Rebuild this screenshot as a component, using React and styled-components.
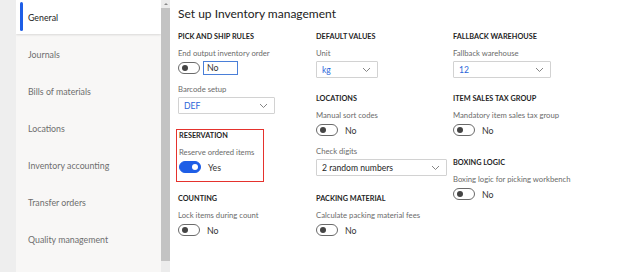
import React from 'react'
import styled, { createGlobalStyle } from 'styled-components'

const navItems = [
  'General',
  'Journals',
  'Bills of materials',
  'Locations',
  'Inventory accounting',
  'Transfer orders',
  'Quality management',
]

const App = () => {
  return (
    <Root>
      <GlobalStyle />
      <Gutter />
      <Nav>
        <NavList>
          {navItems.map((item, i) => (
            <NavItem key={item} active={i === 0}>
              {i === 0 && <ActiveBar />}
              {item}
            </NavItem>
          ))}
        </NavList>
      </Nav>
      <ScrollBar>
        <ScrollArrow />
        <ScrollThumb />
      </ScrollBar>
      <Main>
        <Title>Set up Inventory management</Title>
        <Columns>
          <Column>
            <Section>
              <Header>Pick and ship rules</Header>
              <Field>
                <Label>End output inventory order</Label>
                <ToggleRow>
                  <Toggle />
                  <ValueBox>No</ValueBox>
                </ToggleRow>
              </Field>
              <Field>
                <Label>Barcode setup</Label>
                <Select width={97} accent>DEF</Select>
              </Field>
            </Section>
            <Highlight>
              <Header>Reservation</Header>
              <Field>
                <Label>Reserve ordered items</Label>
                <ToggleRow>
                  <Toggle on />
                  <ToggleText>Yes</ToggleText>
                </ToggleRow>
              </Field>
            </Highlight>
            <Section top={12}>
              <Header>Counting</Header>
              <Field>
                <Label>Lock items during count</Label>
                <ToggleRow>
                  <Toggle />
                  <ToggleText>No</ToggleText>
                </ToggleRow>
              </Field>
            </Section>
          </Column>
          <Column>
            <Section>
              <Header>Default values</Header>
              <Field>
                <Label>Unit</Label>
                <Select width={62} accent>kg</Select>
              </Field>
            </Section>
            <Section top={16}>
              <Header>Locations</Header>
              <Field>
                <Label>Manual sort codes</Label>
                <ToggleRow>
                  <Toggle />
                  <ToggleText>No</ToggleText>
                </ToggleRow>
              </Field>
              <Field>
                <Label>Check digits</Label>
                <Select width={131}>2 random numbers</Select>
              </Field>
            </Section>
            <Section top={18}>
              <Header>Packing material</Header>
              <Field>
                <Label>Calculate packing material fees</Label>
                <ToggleRow>
                  <Toggle />
                  <ToggleText>No</ToggleText>
                </ToggleRow>
              </Field>
            </Section>
          </Column>
          <Column>
            <Section>
              <Header>Fallback warehouse</Header>
              <Field>
                <Label>Fallback warehouse</Label>
                <Select width={98} accent>12</Select>
              </Field>
            </Section>
            <Section top={16}>
              <Header>Item sales tax group</Header>
              <Field>
                <Label>Mandatory item sales tax group</Label>
                <ToggleRow>
                  <Toggle />
                  <ToggleText>No</ToggleText>
                </ToggleRow>
              </Field>
            </Section>
            <Section top={21}>
              <Header>Boxing logic</Header>
              <Field>
                <Label>Boxing logic for picking workbench</Label>
                <ToggleRow>
                  <Toggle />
                  <ToggleText>No</ToggleText>
                </ToggleRow>
              </Field>
            </Section>
          </Column>
        </Columns>
      </Main>
    </Root>
  )
}

const Select = ({ width, accent, children }) => (
  <SelectBox style={{ width }}>
    <SelectValue accent={accent}>{children}</SelectValue>
    <svg width="9" height="6" viewBox="0 0 9 6">
      <path d="M1 1l3.5 3.5L8 1" fill="none" stroke="#777" strokeWidth="0.9" />
    </svg>
  </SelectBox>
)

const GlobalStyle = createGlobalStyle`
  html, body {
    margin: 0;
    padding: 0;
    background: #ffffff;
  }
  body {
    font-family: Lato, 'Open Sans', sans-serif;
    color: #262626;
  }
`

const Root = styled.div`
  width: 633px;
  height: 272px;
  display: flex;
  overflow: hidden;
  background: #ffffff;
`

const Gutter = styled.div`
  width: 16px;
  flex-shrink: 0;
  background: #eeeeee;
`

const Nav = styled.div`
  width: 145px;
  flex-shrink: 0;
  background: #f8f7f6;
  overflow: hidden;
`

const NavList = styled.div`
  margin-top: -3px;
  display: flex;
  flex-direction: column;
`

const NavItem = styled.div`
  position: relative;
  height: 37px;
  display: flex;
  align-items: center;
  padding-left: 12px;
  padding-top: 3px;
  box-sizing: border-box;
  font-size: 8.8px;
  color: ${(p) => (p.active ? '#1b1b1b' : '#6e6e6e')};
  background: ${(p) => (p.active ? '#ffffff' : 'transparent')};
  box-shadow: ${(p) => (p.active ? '0 1px 2px rgba(0,0,0,0.12)' : 'none')};
`

const ActiveBar = styled.span`
  position: absolute;
  left: 4px;
  top: 5px;
  bottom: 3px;
  width: 3px;
  border-radius: 2px;
  background: #1e5ee6;
`

const ScrollBar = styled.div`
  width: 9px;
  flex-shrink: 0;
  background: #ececec;
  display: flex;
  flex-direction: column;
  align-items: center;
`

const ScrollArrow = styled.div`
  margin-top: 3px;
  width: 0;
  height: 0;
  border-left: 2px solid transparent;
  border-right: 2px solid transparent;
  border-bottom: 2px solid #8a8a8a;
`

const ScrollThumb = styled.div`
  margin-top: 3px;
  width: 9px;
  height: 253px;
  background: #c3c3c3;
`

const Main = styled.div`
  flex: 1;
  padding: 5px 0 0 8px;
  background: #ffffff;
`

const Title = styled.div`
  font-size: 12px;
  line-height: 17px;
  color: #222222;
`

const Columns = styled.div`
  margin-top: 10px;
  display: grid;
  grid-template-columns: 138px 137px 140px;
  align-items: start;
`

const Column = styled.div`
  display: flex;
  flex-direction: column;
`

const Section = styled.div`
  display: flex;
  flex-direction: column;
  gap: 9px;
  margin-top: ${(p) => p.top || 0}px;
`

const Highlight = styled.div`
  margin: 15px 0 0 -2px;
  width: 84px;
  padding: 1px 0 7px 2px;
  border: 1.5px solid #e5322d;
  display: flex;
  flex-direction: column;
  gap: 9px;
`

const Header = styled.div`
  font-size: 7.3px;
  line-height: 10px;
  font-weight: 700;
  text-transform: uppercase;
  color: #1f1f1f;
  margin-bottom: -3px;
`

const Field = styled.div`
  display: flex;
  flex-direction: column;
`

const Label = styled.div`
  font-size: 7.7px;
  line-height: 10px;
  color: #6b6b6b;
  margin-bottom: 3px;
  white-space: nowrap;
`

const ToggleRow = styled.div`
  display: flex;
  align-items: center;
  height: 14px;
`

const Toggle = styled.span`
  position: relative;
  width: 22px;
  height: 12px;
  box-sizing: border-box;
  border-radius: 7px;
  border: 1px solid ${(p) => (p.on ? '#1e5ee6' : '#6a6a6a')};
  background: ${(p) => (p.on ? '#1e5ee6' : '#ffffff')};
  flex-shrink: 0;
  &::after {
    content: '';
    position: absolute;
    top: 2px;
    left: ${(p) => (p.on ? '12px' : '3px')};
    width: 6px;
    height: 6px;
    border-radius: 50%;
    background: ${(p) => (p.on ? '#ffffff' : '#444444')};
  }
`

const ToggleText = styled.span`
  margin-left: 7px;
  font-size: 8.8px;
  color: #333333;
`

const ValueBox = styled.span`
  margin-left: 3px;
  width: 35px;
  height: 14px;
  box-sizing: border-box;
  border: 1px solid #4a7fd8;
  font-size: 8.8px;
  line-height: 12px;
  padding-left: 3px;
  color: #333333;
`

const SelectBox = styled.div`
  height: 17px;
  box-sizing: border-box;
  border: 1px solid #d2d2d2;
  border-radius: 1px;
  display: flex;
  align-items: center;
  justify-content: space-between;
  padding: 0 6px 0 5px;
`

const SelectValue = styled.span`
  font-size: 8.6px;
  color: ${(p) => (p.accent ? '#2a66d9' : '#262626')};
`

export default App
